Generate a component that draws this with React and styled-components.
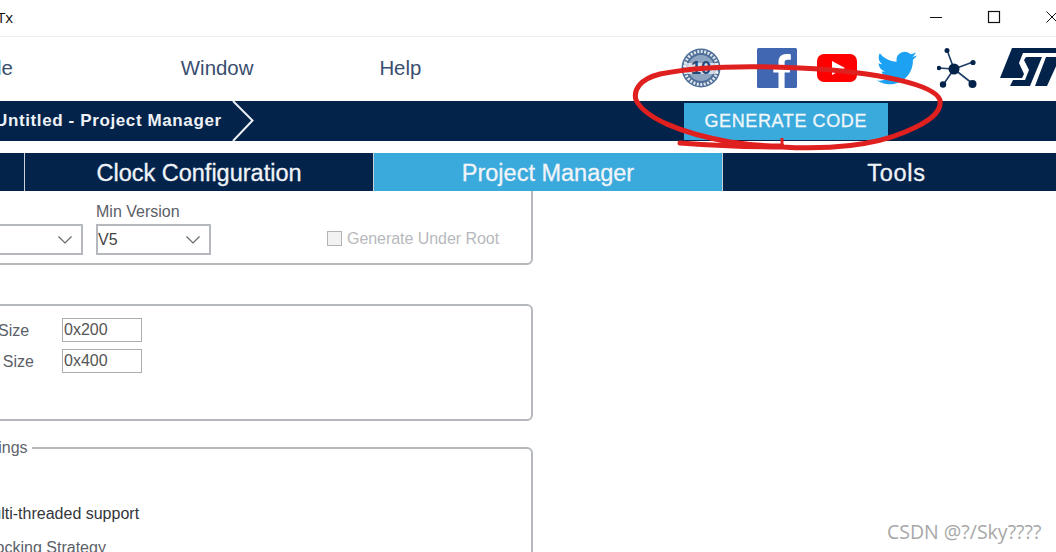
import React from 'react';
import styled, { createGlobalStyle } from 'styled-components';
import { FaTwitter } from 'react-icons/fa';

const Global = createGlobalStyle`
  html, body { margin: 0; padding: 0; background: #fff; }
  body { font-family: "Liberation Sans", Arial, sans-serif; }
`;

const Page = styled.div`
  position: relative;
  width: 1056px;
  height: 552px;
  overflow: hidden;
  background: #fff;
  display: flex;
  flex-direction: column;
`;

const TitleBar = styled.div`
  box-sizing: border-box;
  height: 37px;
  padding-bottom: 2px;
  flex: none;
  display: flex;
  align-items: center;
  border-bottom: 1px solid #e9eef4;
`;

const TitleClip = styled.div`
  width: 13px;
  overflow: hidden;
  display: flex;
  justify-content: flex-end;
  white-space: nowrap;
  font-family: "Open Sans", sans-serif;
  font-size: 15px;
  color: #111;
`;

const WindowControls = styled.div`
  margin-left: auto;
  display: flex;
  align-items: center;
  margin-right: -3px;
`;

const WinButton = styled.svg`
  width: 14px;
  height: 14px;
  margin-left: ${p => p.$gap}px;
  flex: none;
  display: block;
`;

const MenuBar = styled.div`
  box-sizing: border-box;
  height: 64px;
  padding-bottom: 2px;
  flex: none;
  display: flex;
  align-items: center;
`;

const MenuItem = styled.div`
  margin-left: ${p => p.$ml}px;
  font-size: 20.4px;
  color: #3a4e70;
  white-space: nowrap;
`;

const Socials = styled.div`
  position: absolute;
  left: 681px;
  top: 48px;
  display: flex;
  align-items: center;
`;

const IconSvg = styled.svg`
  width: 40px;
  height: 40px;
  margin-left: ${p => p.$ml || 0}px;
  display: block;
  flex: none;
`;

const TwitterIcon = styled(FaTwitter)`
  width: 40px;
  height: 40px;
  margin-left: 20px;
  color: #1da1f2;
  flex: none;
  display: block;
`;

const StLogo = styled.svg`
  width: 72px;
  height: 40px;
  margin-left: 23px;
  display: block;
  flex: none;
`;

const NavBar = styled.div`
  height: 40px;
  flex: none;
  background: #03234b;
  display: flex;
  align-items: center;
`;

const Crumb = styled.div`
  margin-left: -5px;
  font-size: 17px;
  font-weight: 700;
  letter-spacing: 0.62px;
  color: #eef2f6;
  white-space: nowrap;
`;

const Chevron = styled.svg`
  width: 24px;
  height: 40px;
  margin-left: 10px;
  flex: none;
  display: block;
`;

const GenerateButton = styled.button`
  margin-left: 428px;
  width: 204px;
  height: 37px;
  border: 0;
  padding: 0;
  background: #3aa9dc;
  color: #f0f7fb;
  font-family: "Liberation Sans", Arial, sans-serif;
  font-size: 18px;
  letter-spacing: 0.6px;
  -webkit-text-stroke: 0.3px #f0f7fb;
`;

const Tabs = styled.div`
  position: relative;
  z-index: 1;
  margin-top: 12px;
  height: 38px;
  flex: none;
  display: flex;
  gap: 1px;
  background: #c9d1da;
`;

const Tab = styled.div`
  box-sizing: border-box;
  width: ${p => p.$w}px;
  flex: none;
  padding-top: 2px;
  background: ${p => (p.$active ? '#3aa9dc' : '#03234b')};
  color: #f0f4f8;
  font-size: 23.5px;
  letter-spacing: ${p => p.$track || 0}px;
  -webkit-text-stroke: 0.3px #f0f4f8;
  display: flex;
  align-items: center;
  justify-content: center;
`;

const Content = styled.div`
  flex: 1;
  min-height: 0;
  display: flex;
  flex-direction: column;
  margin-left: -130px;
  width: 663px;
`;

const Panel = styled.div`
  position: relative;
  box-sizing: border-box;
  height: ${p => p.$h}px;
  margin-top: ${p => p.$mt}px;
  flex: none;
  border: 2px solid #b5b8bd;
  border-radius: 6px;
`;

const LegendText = styled.span`
  position: absolute;
  top: -10px;
  left: 3px;
  padding: 0 4px;
  background: #fff;
  font-size: 16px;
  color: #60646a;
  white-space: nowrap;
`;

const SelectRow = styled.div`
  position: absolute;
  left: 0;
  right: 0;
  top: 21px;
  display: flex;
  align-items: flex-end;
`;

const Field = styled.div`
  display: flex;
  flex-direction: column;
  gap: 3px;
  margin-left: ${p => p.$ml}px;
`;

const Label = styled.div`
  font-size: 16px;
  color: #5b6068;
  padding-top: ${p => p.$pt || 0}px;
  padding-left: ${p => p.$pl || 0}px;
`;

const Select = styled.div`
  box-sizing: border-box;
  width: ${p => p.$w}px;
  height: 31px;
  border: 2px solid #b5b8bd;
  display: flex;
  align-items: center;
  justify-content: space-between;
  padding: 0 8px 0 0;
  font-size: 16px;
  color: #444;
`;

const CheckWrap = styled.div`
  display: flex;
  align-items: center;
  gap: 5px;
  margin-left: 116px;
  height: 31px;
  margin-bottom: 1px;
  color: #b7b9bc;
  font-size: 16px;
  letter-spacing: -0.05px;
`;

const Check = styled.span`
  box-sizing: border-box;
  width: 15px;
  height: 15px;
  border: 1px solid #b0b3b7;
  background: #f2f2f2;
  flex: none;
`;

const SizeRows = styled.div`
  display: flex;
  flex-direction: column;
  gap: 7px;
  padding: 12px 0 0 14px;
`;

const SizeRow = styled.div`
  display: grid;
  grid-template-columns: 176px 80px;
  align-items: center;
`;

const TextValue = styled.div`
  box-sizing: border-box;
  height: 24px;
  border: 1px solid #a9acb1;
  padding-left: 1px;
  font-size: 16px;
  line-height: 22px;
  color: #555;
`;

const OptionLine = styled.div`
  position: absolute;
  left: ${p => p.$x}px;
  top: ${p => p.$y}px;
  font-size: 16px;
  color: ${p => p.$c};
  white-space: nowrap;
`;

const Annotation = styled.svg`
  position: absolute;
  left: 0;
  top: 0;
  width: 1056px;
  height: 552px;
  z-index: 5;
  pointer-events: none;
`;

const Watermark = styled.div`
  position: absolute;
  left: 887px;
  top: 518px;
  z-index: 6;
  font-family: "Open Sans", sans-serif;
  font-size: 19.5px;
  color: #a8a8a8;
  white-space: nowrap;
`;

const Chev = () => (
  <svg width="16" height="10" viewBox="0 0 16 10"><path d="M1.5 1.5 8 8l6.500-6.500" fill="none" stroke="#666" strokeWidth="1.2" /></svg>
);

export default function App() {
  return (
    <Page>
      <Global />
      <TitleBar>
        <TitleClip><span>STM32CubeMX Untitled: STM32F103C8Tx</span></TitleClip>
        <WindowControls>
          <WinButton $gap={0} viewBox="0 0 14 14"><path d="M1 7.500h12" stroke="#111" strokeWidth="1" /></WinButton>
          <WinButton $gap={44} viewBox="0 0 14 14"><rect x="1.500" y="1.500" width="11" height="11" fill="none" stroke="#111" strokeWidth="1.200" /></WinButton>
          <WinButton $gap={44} viewBox="0 0 14 14"><path d="M1.500 1.500l11 11M12.500 1.500l-11 11" stroke="#111" strokeWidth="1" /></WinButton>
        </WindowControls>
      </TitleBar>
      <MenuBar>
        <MenuItem $ml={-20}>File</MenuItem>
        <MenuItem $ml={168}>Window</MenuItem>
        <MenuItem $ml={126}>Help</MenuItem>
      </MenuBar>
      <Socials>
        <IconSvg viewBox="0 0 40 40">
          <circle cx="20" cy="20" r="19.500" fill="#4f6f98" />
          <circle cx="20" cy="20" r="16.500" fill="none" stroke="#dfe6ee" strokeWidth="3" strokeDasharray="2 1.500" />
          <circle cx="20" cy="20" r="13" fill="#8ea5c2" />
          <path d="M3 15h34v11H3z" fill="#eef2f6" opacity=".75" />
          <text x="20" y="26" textAnchor="middle" fontFamily="Liberation Sans" fontWeight="700" fontSize="18" fill="#274a78">10</text>
        </IconSvg>
        <IconSvg $ml={36} viewBox="0 0 40 40">
          <rect width="40" height="40" rx="1.500" fill="#4267b2" />
          <path d="M27.600 40V24.500h5.200l.8-6h-6v-3.900c0-1.700.5-2.900 3-2.900h3.200V6.300c-.6-.1-2.400-.3-4.600-.3-4.600 0-7.700 2.800-7.700 7.900v4.600h-5.200v6h5.200V40z" fill="#fff" />
        </IconSvg>
        <IconSvg $ml={20} viewBox="0 0 40 40">
          <rect x="0" y="6" width="40" height="28" rx="7" fill="#fe0000" />
          <path d="M15 13l13 7-13 7z" fill="#fff" />
        </IconSvg>
        <TwitterIcon />
        <IconSvg $ml={20} viewBox="0 0 40 40">
          <g stroke="#1d3c66" strokeWidth="1.600">
            <path d="M17 21 10 2M17 21 36 14M17 21 36 36M17 21 6 37M17 21 1 20" />
          </g>
          <g fill="#03234b">
            <circle cx="17" cy="21" r="5.500" />
            <circle cx="10" cy="2.500" r="2.500" />
            <circle cx="36" cy="14.500" r="2.600" />
            <circle cx="35.500" cy="36" r="4" />
            <circle cx="6" cy="36.500" r="3.200" />
            <circle cx="2" cy="20" r="2.200" />
          </g>
        </IconSvg>
        <StLogo viewBox="0 0 72 40">
          <path fill="#03234b" d="M12 0H72V5H23L19 15L24 26L22 30H0z" />
          <path fill="#03234b" d="M26 9H42L30 38H10L13 32H25L29 22L24 12z" />
          <path fill="#03234b" d="M46 9H72V14H58L47 38H35z" />
        </StLogo>
      </Socials>
      <NavBar>
        <Crumb>Untitled - Project Manager</Crumb>
        <Chevron viewBox="0 0 24 40"><path d="M1 0l19.500 19.500L1 40" fill="none" stroke="#eef2f6" strokeWidth="2" /></Chevron>
        <GenerateButton>GENERATE CODE</GenerateButton>
      </NavBar>
      <Tabs>
        <Tab $w={24} />
        <Tab $w={348}>Clock Configuration</Tab>
        <Tab $w={348} $active>Project Manager</Tab>
        <Tab $w={347} $track={0.7}>Tools</Tab>
      </Tabs>
      <Content>
        <Panel $h={85} $mt={-11}>
          <SelectRow>
            <Field $ml={0}>
              <Label>Toolchain / IDE</Label>
              <Select $w={211}><span /><Chev /></Select>
            </Field>
            <Field $ml={13}>
              <Label>Min Version</Label>
              <Select $w={115}><span>V5</span><Chev /></Select>
            </Field>
            <CheckWrap><Check />Generate Under Root</CheckWrap>
          </SelectRow>
        </Panel>
        <Panel $h={117} $mt={39}>
          <SizeRows>
            <SizeRow><Label $pt={2}>Minimum Heap Size</Label><TextValue>0x200</TextValue></SizeRow>
            <SizeRow><Label $pt={2} $pl={3}>Minimum Stack Size</Label><TextValue>0x400</TextValue></SizeRow>
          </SizeRows>
        </Panel>
        <Panel $h={140} $mt={26}>
          <LegendText>Thread-safe Settings</LegendText>
          <OptionLine $x={107} $y={56} $c="#33363b">Multi-threaded support</OptionLine>
          <OptionLine $x={24} $y={90} $c="#5b6068">Thread-safe Locking Strategy</OptionLine>
        </Panel>
      </Content>
      <Annotation viewBox="0 0 1056 552">
        <path d="M680 143C720 146 745 147 782 147C830 150 875 145 905 132C930 122 942 112 940 100C935 85 880 72 800 68C740 65 690 68 660 74C640 79 633 90 636 100C645 118 680 133 730 142C750 145 770 146 782 146" fill="none" stroke="#e01f1f" strokeWidth="5" strokeLinecap="round" />
        <path d="M782 138v8" fill="none" stroke="#e01f1f" strokeWidth="3" />
      </Annotation>
      <Watermark>CSDN @?/Sky????</Watermark>
    </Page>
  );
}
